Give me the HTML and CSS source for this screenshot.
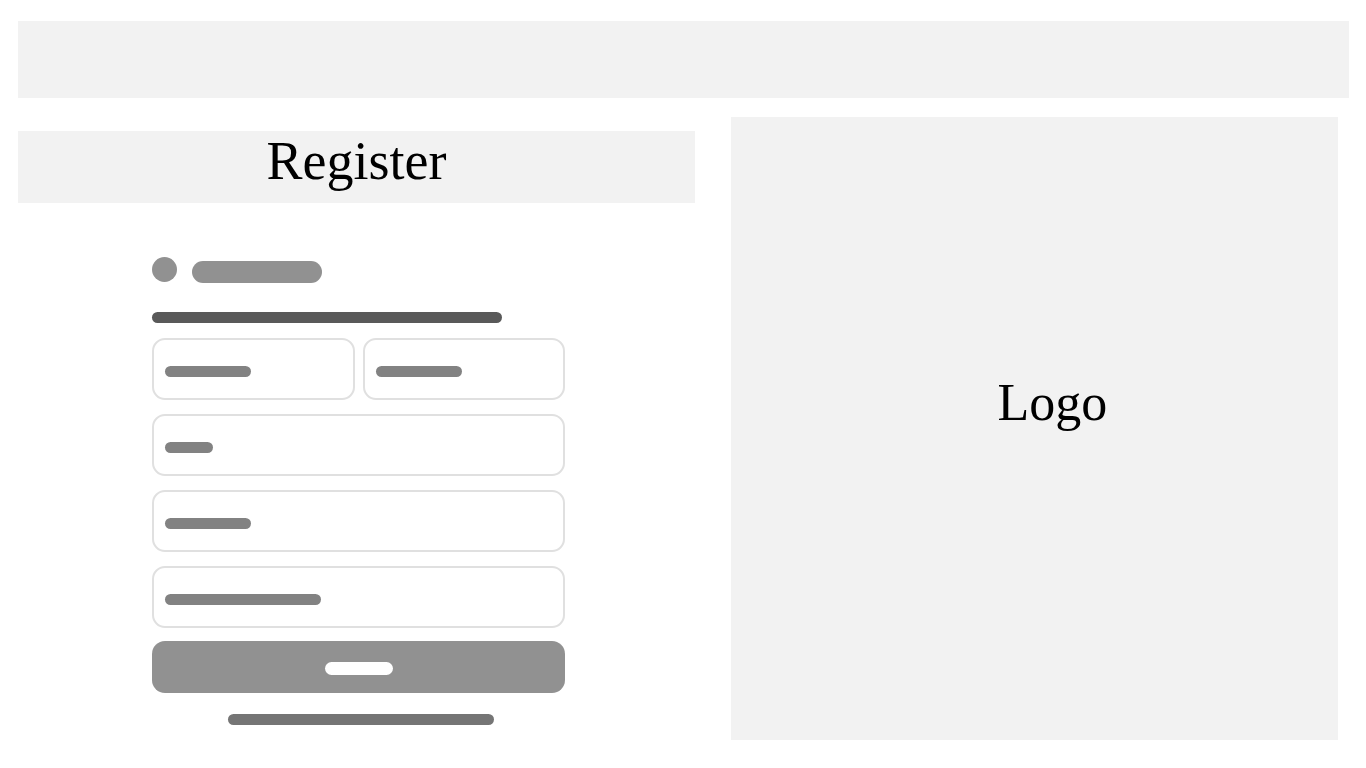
FILE: index.html
```html
<!DOCTYPE html>
<html lang="en">
<head>
  <meta charset="utf-8">
  <meta name="viewport" content="width=device-width, initial-scale=1">
  <title>Register</title>
  <link rel="stylesheet" href="styles.css">
</head>
<body>
  <header class="topbar"></header>
  <main class="layout">
    <section class="register">
      <h1 class="title">Register</h1>
      <form class="form">
        <div class="brand">
          <span class="avatar"></span>
          <span class="brand-name"></span>
        </div>
        <div class="bar heading"></div>
        <div class="fields">
          <div class="pair">
            <div class="field">
              <input class="input" id="first" type="text">
              <label class="bar label label-medium" for="first" aria-label="First name"></label>
            </div>
            <div class="field">
              <input class="input" id="last" type="text">
              <label class="bar label label-medium" for="last" aria-label="Last name"></label>
            </div>
          </div>
          <div class="field">
            <input class="input" id="email" type="email">
            <label class="bar label label-short" for="email" aria-label="Email"></label>
          </div>
          <div class="field">
            <input class="input" id="password" type="password">
            <label class="bar label label-medium" for="password" aria-label="Password"></label>
          </div>
          <div class="field">
            <input class="input" id="confirm" type="password">
            <label class="bar label label-long" for="confirm" aria-label="Confirm password"></label>
          </div>
        </div>
        <button class="submit" type="submit" aria-label="Register"><span class="submit-bar"></span></button>
        <a class="bar signin" href="#" aria-label="Sign in"></a>
      </form>
    </section>
    <aside class="logo">Logo</aside>
  </main>
</body>
</html>
```

FILE: styles.css
```css
* {
  box-sizing: border-box;
}

body {
  margin: 0;
  padding: 21px 17px 28px 18px;
  background: #fff;
  color: #000;
  font-family: "Liberation Serif", "Times New Roman", serif;
}

.topbar {
  min-height: 77px;
  background: #f2f2f2;
}

.layout {
  display: grid;
  grid-template-columns: 677fr 607fr;
  gap: 36px;
  padding: 19px 11px 0 0;
}

.register {
  padding-top: 14px;
}

.title {
  margin: 0;
  padding-bottom: 12px;
  background: #f2f2f2;
  font-size: 54px;
  font-weight: 400;
  line-height: 60px;
  text-align: center;
}

.form {
  display: flex;
  flex-direction: column;
  max-width: 417px;
  margin: 54px auto 0;
  padding-left: 4px;
}

.brand {
  display: flex;
  align-items: flex-end;
  gap: 15px;
  height: 26px;
}

.avatar {
  width: 25px;
  height: 25px;
  align-self: flex-start;
  border-radius: 50%;
  background: #919191;
}

.brand-name {
  width: 130px;
  height: 22px;
  border-radius: 11px;
  background: #919191;
}

.bar {
  display: block;
  height: 11px;
  border-radius: 6px;
  background: #828282;
}

.heading {
  width: 350px;
  margin: 29px 0 15px;
  background: #595959;
}

.fields {
  display: grid;
  gap: 14px;
}

.pair {
  display: grid;
  grid-template-columns: 1fr 1fr;
  gap: 8px;
}

.field {
  position: relative;
}

.input {
  display: block;
  width: 100%;
  height: 62px;
  padding: 0 14px;
  border: 2px solid #e0e0e0;
  border-radius: 13px;
  background: #fff;
  font: inherit;
  font-size: 16px;
}

.label {
  position: absolute;
  top: 28px;
  left: 13px;
}

.label-short {
  width: 48px;
}

.label-medium {
  width: 86px;
}

.label-long {
  width: 156px;
}

.submit {
  display: flex;
  align-items: center;
  justify-content: center;
  height: 52px;
  margin-top: 13px;
  padding: 2px 0 0;
  border: 0;
  border-radius: 13px;
  background: #919191;
}

.submit-bar {
  width: 68px;
  height: 13px;
  border-radius: 7px;
  background: #fff;
}

.signin {
  width: 266px;
  margin: 21px 0 0 76px;
  background: #757575;
}

.logo {
  display: flex;
  align-items: center;
  justify-content: center;
  min-height: 623px;
  padding: 0 0 52px 36px;
  background: #f2f2f2;
  font-size: 52px;
}
```
